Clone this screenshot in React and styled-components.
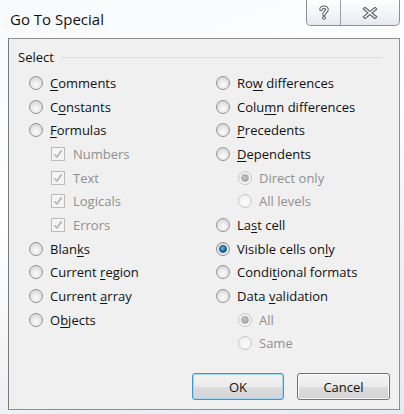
import React from 'react';
import styled, { createGlobalStyle } from 'styled-components';

const GlobalStyle = createGlobalStyle`
  html, body {
    margin: 0;
    padding: 0;
    background: #dfe6ee;
  }
  body {
    font-family: "Open Sans", "Noto Sans", "Liberation Sans", sans-serif;
  }
`;

const Window = styled.div`
  width: 404px;
  height: 414px;
  box-sizing: border-box;
  display: flex;
  flex-direction: column;
  background: linear-gradient(160deg, #f7f9fb 0%, #ffffff 40%, #eef2f6 70%, #e4ebf2 100%);
  padding: 0 4px 4px 8px;
`;

const TitleBar = styled.div`
  height: 38px;
  display: flex;
  align-items: flex-start;
`;

const Title = styled.div`
  margin-top: 9px;
  margin-left: 2px;
  font-size: 15px;
  color: #111;
  flex: 1;
`;

const CaptionButtons = styled.div`
  display: flex;
  height: 25px;
  border: 1px solid #8c9096;
  border-top: none;
  border-radius: 0 0 5px 5px;
  background: linear-gradient(#ffffff, #f1f3f6 60%, #e6eaef);
  overflow: hidden;
`;

const CaptionButton = styled.div`
  width: ${p => p.$w}px;
  display: flex;
  align-items: center;
  justify-content: center;
  border-left: ${p => (p.$first ? 'none' : '1px solid #9aa0a7')};
`;

const Client = styled.div`
  flex: 1;
  display: flex;
  flex-direction: column;
  background: #f0f0f0;
  border: 1px solid #8e8e8e;
  border-left-color: #7c7c7c;
  padding: 8px 9px 9px 9px;
`;

const GroupHeader = styled.div`
  height: 20px;
  display: flex;
  align-items: center;
  gap: 7px;
  font-size: 13px;
  color: #111;
  &::after {
    content: '';
    flex: 1;
    height: 1px;
    background: #d5dfe5;
    margin-right: 7px;
  }
`;

const Columns = styled.div`
  display: grid;
  grid-template-columns: 187px 1fr;
  margin-top: 4px;
  padding-left: 11px;
`;

const Column = styled.div`
  display: flex;
  flex-direction: column;
`;

const Row = styled.div`
  height: 23.7px;
  display: flex;
  align-items: center;
  padding-left: ${p => (p.$sub ? 22 : 0)}px;
  font-size: 13px;
  color: ${p => (p.$disabled ? '#8f8f8f' : '#111')};
`;

const Radio = styled.span`
  width: 14px;
  height: 14px;
  box-sizing: border-box;
  border-radius: 50%;
  border: 1px solid ${p => (p.$disabled ? '#c8c8c8' : '#939393')};
  background: ${p =>
    p.$disabled
      ? 'radial-gradient(circle at 50% 60%, #fafafa 20%, #e8e8e8 100%)'
      : 'radial-gradient(circle at 50% 65%, #fdfdfd 0%, #e9e9e9 45%, #c8c8c8 100%)'};
  margin-right: 7px;
  display: flex;
  align-items: center;
  justify-content: center;
  flex-shrink: 0;
  &::after {
    content: '';
    display: ${p => (p.$checked ? 'block' : 'none')};
    width: 6px;
    height: 6px;
    border-radius: 50%;
    background: ${p =>
      p.$disabled
        ? 'radial-gradient(circle at 40% 35%, #c8c8c8, #9a9a9a)'
        : 'radial-gradient(circle at 40% 35%, #5fc0f0, #0d5f9c 70%)'};
    border: 1px solid ${p => (p.$disabled ? '#a8a8a8' : '#1a4d7a')};
  }
`;

const Check = styled.span`
  width: 14px;
  height: 14px;
  box-sizing: border-box;
  border: 1px solid #bcbcbc;
  background: #f4f4f4;
  margin-right: 8px;
  display: flex;
  align-items: center;
  justify-content: center;
  flex-shrink: 0;
`;

const Key = styled.span`
  text-decoration: underline;
  text-underline-offset: 2px;
`;

const Buttons = styled.div`
  margin-top: auto;
  display: flex;
  justify-content: flex-end;
  gap: 13px;
`;

const Button = styled.button`
  width: ${p => p.$w}px;
  height: 27px;
  box-sizing: border-box;
  font-family: inherit;
  font-size: 13px;
  color: #111;
  border-radius: 3px;
  border: 1px solid ${p => (p.$default ? '#3d95d1' : '#707070')};
  box-shadow: ${p => (p.$default ? 'inset 0 0 0 1px #a6d8f5' : 'inset 0 0 0 1px #fbfbfb')};
  background: linear-gradient(#f3f3f3 0%, #ebebeb 50%, #dddddd 51%, #d3d3d3 100%);
  padding: 0;
`;

const HelpIcon = () => (
  <svg width="12" height="15" viewBox="0 0 12 15">
    <g fill="none" strokeLinecap="round" strokeLinejoin="round">
      <path d="M3 4.5 C3 1.5 9 1.5 9 4.5 C9 6.8 6 6.8 6 9.5" stroke="#5a5f66" strokeWidth="3.6" />
      <path d="M3 4.5 C3 1.5 9 1.5 9 4.5 C9 6.8 6 6.8 6 9.5" stroke="#f4f5f7" strokeWidth="1.6" />
      <circle cx="6" cy="12.8" r="1.5" fill="#f4f5f7" stroke="#5a5f66" strokeWidth="1" />
    </g>
  </svg>
);

const CloseIcon = () => (
  <svg width="16" height="12" viewBox="0 0 16 12">
    <g fill="none" strokeLinecap="square">
      <path d="M3 2 L13 10 M13 2 L3 10" stroke="#5a5f66" strokeWidth="3.6" />
      <path d="M3 2 L13 10 M13 2 L3 10" stroke="#f4f5f7" strokeWidth="1.6" />
    </g>
  </svg>
);

const CheckMark = () => (
  <svg width="10" height="10" viewBox="0 0 10 10">
    <path d="M1.5 5.5 L4 8 L8.5 1.5" fill="none" stroke="#a9a9a9" strokeWidth="1.4" />
  </svg>
);

const RadioRow = ({ label, keyAt, keyLen = 1, checked, disabled, sub }) => {
  const pre = label.slice(0, keyAt);
  const k = label.slice(keyAt, keyAt + keyLen);
  const post = label.slice(keyAt + keyLen);
  return (
    <Row $sub={sub} $disabled={disabled}>
      <Radio $checked={checked} $disabled={disabled} />
      {keyAt == null ? (
        label
      ) : (
        <span>
          {pre}
          <Key>{k}</Key>
          {post}
        </span>
      )}
    </Row>
  );
};

const CheckRow = ({ label }) => (
  <Row $sub $disabled>
    <Check>
      <CheckMark />
    </Check>
    {label}
  </Row>
);

export default function App() {
  return (
    <>
      <GlobalStyle />
      <Window>
        <TitleBar>
          <Title>Go To Special</Title>
          <CaptionButtons>
            <CaptionButton $w={33} $first>
              <HelpIcon />
            </CaptionButton>
            <CaptionButton $w={58}>
              <CloseIcon />
            </CaptionButton>
          </CaptionButtons>
        </TitleBar>
        <Client>
          <GroupHeader>Select</GroupHeader>
          <Columns>
            <Column>
              <RadioRow label="Comments" keyAt={0} />
              <RadioRow label="Constants" keyAt={1} />
              <RadioRow label="Formulas" keyAt={0} />
              <CheckRow label="Numbers" />
              <CheckRow label="Text" />
              <CheckRow label="Logicals" />
              <CheckRow label="Errors" />
              <RadioRow label="Blanks" keyAt={4} />
              <RadioRow label="Current region" keyAt={8} />
              <RadioRow label="Current array" keyAt={8} />
              <RadioRow label="Objects" keyAt={1} />
            </Column>
            <Column>
              <RadioRow label="Row differences" keyAt={2} />
              <RadioRow label="Column differences" keyAt={4} />
              <RadioRow label="Precedents" keyAt={0} />
              <RadioRow label="Dependents" keyAt={0} />
              <RadioRow label="Direct only" sub disabled checked />
              <RadioRow label="All levels" sub disabled />
              <RadioRow label="Last cell" keyAt={2} />
              <RadioRow label="Visible cells only" keyAt={16} checked />
              <RadioRow label="Conditional formats" keyAt={5} />
              <RadioRow label="Data validation" keyAt={5} />
              <RadioRow label="All" sub disabled checked />
              <RadioRow label="Same" sub disabled />
            </Column>
          </Columns>
          <Buttons>
            <Button $w={92} $default>OK</Button>
            <Button $w={93}>Cancel</Button>
          </Buttons>
        </Client>
      </Window>
    </>
  );
}
